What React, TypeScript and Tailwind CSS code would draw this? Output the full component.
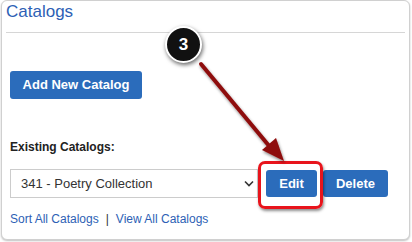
import React from 'react';

export default function App() {
  return (
    <div
      className="relative w-[412px] h-[242px] bg-white overflow-hidden"
      style={{ fontFamily: '"Liberation Sans", Arial, sans-serif' }}
    >
      {/* Panel */}
      <div className="absolute left-[1px] top-0 w-[409px] h-[240px] border border-[#d0d0d0] rounded-[6px] bg-white shadow-[0_1px_2px_rgba(0,0,0,0.25)]">
        <div className="h-[32px] mx-[4px] border-b border-[#d6d6d6] pt-[1px]">
          <h1 className="text-[17px] leading-[20px] text-[#2d5fb5]">Catalogs</h1>
        </div>

        <div className="px-[8px] pt-[38px]">
          <button className="h-[28px] w-[132px] rounded-[3px] bg-[#2b6cbb] text-white text-[13px] font-bold">
            Add New Catalog
          </button>

          <p className="mt-[41px] text-[12px] leading-[15px] font-bold text-[#222]">Existing Catalogs:</p>

          <div className="mt-[14px] flex items-center">
            <div className="h-[29px] w-[248px] border border-[#ccc] flex items-center justify-between pl-[10px] pr-[3px] text-[13px] text-[#333]">
              <span>341 - Poetry Collection</span>
              <svg width="10" height="7" viewBox="0 0 10 7" fill="none">
                <path d="M1 1.5 L5 5.5 L9 1.5" stroke="#333" strokeWidth="1.6" />
              </svg>
            </div>
            <button className="ml-[8px] h-[27px] w-[51px] rounded-[3px] bg-[#2b6cbb] text-white text-[13px] font-bold">
              Edit
            </button>
            <button className="ml-[6px] h-[27px] w-[65px] rounded-[3px] bg-[#2b6cbb] text-white text-[13px] font-bold">
              Delete
            </button>
          </div>

          <div className="mt-[12px] text-[12px] text-[#2d5fb5] flex gap-[7px]">
            <span>Sort All Catalogs</span>
            <span className="text-[#333]">|</span>
            <span>View All Catalogs</span>
          </div>
        </div>
      </div>

      {/* Highlight around Edit */}
      <div className="absolute left-[258px] top-[161px] w-[65px] h-[48px] border-[3px] border-[#e8141c] rounded-[7px] shadow-[1px_2px_3px_rgba(0,0,0,0.45)]" />

      {/* Arrow */}
      <svg className="absolute left-0 top-0" width="412" height="242" viewBox="0 0 412 242">
        <defs>
          <filter id="sh" x="-20%" y="-20%" width="140%" height="140%">
            <feDropShadow dx="1" dy="2" stdDeviation="1.5" floodColor="#000" floodOpacity="0.45" />
          </filter>
        </defs>
        <g filter="url(#sh)">
          <line x1="201" y1="64" x2="270" y2="147" stroke="#8e0b0b" strokeWidth="4" strokeLinecap="round" />
          <polygon points="284,161 262,150 276,138" fill="#8e0b0b" />
        </g>
      </svg>

      {/* Step badge */}
      <div className="absolute left-[165px] top-[26px] w-[37px] h-[37px] rounded-full bg-[#111] border-[2px] border-white shadow-[1px_2px_4px_rgba(0,0,0,0.6)] flex items-center justify-center text-white text-[17px] font-bold">
        3
      </div>
    </div>
  );
}
